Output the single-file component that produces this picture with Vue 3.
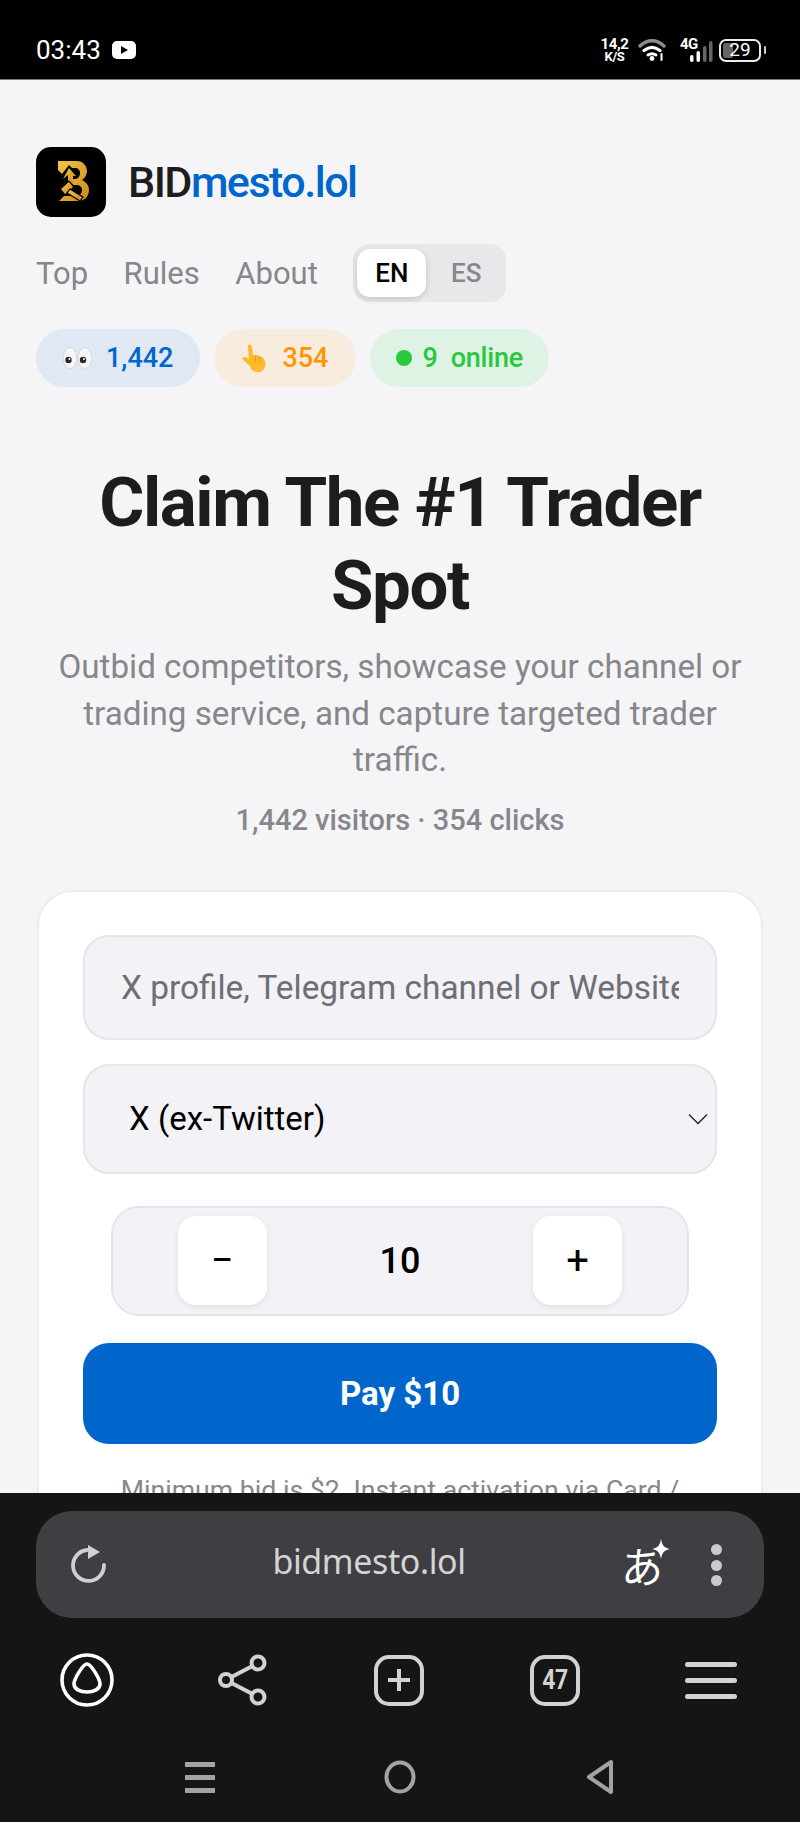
<script setup>
// 모바일 브라우저로 본 입찰 페이지 화면
import { ref } from 'vue';

const amount = ref(10);
const source = ref('x');
const lang = ref('EN');
</script>

<template>
  <div class="phone">
    <div class="status">
      <div class="status-left">
        <span class="clock">03:43</span>
        <svg class="yt" width="24" height="18" viewBox="0 0 24 18">
          <rect width="24" height="18" rx="5" fill="#fff" />
          <path d="M9 5l7 4-7 4z" fill="#000" />
        </svg>
      </div>
      <div class="status-right">
        <div class="speed"><span>14,2</span><span class="speed-unit">K/S</span></div>
        <svg width="28" height="22" viewBox="0 0 28 22" fill="none" stroke-linecap="round">
          <path d="M2 7C9 0 19 0 26 7" stroke="#8b8b8b" stroke-width="3.4" />
          <path d="M6 11.500c5-4 11-4 16 0" stroke="#fff" stroke-width="3.2" />
          <path d="M10 16c3-2 5-2 8 0" stroke="#fff" stroke-width="3" />
          <circle cx="14" cy="19.500" r="2.400" fill="#fff" />
          <path d="M23.500 15v6" stroke="#fff" stroke-width="2" />
        </svg>
        <div class="signal">
          <span class="net">4G</span>
          <svg width="24" height="22" viewBox="0 0 24 22">
            <rect x="0" y="14" width="3.500" height="7" rx="1.700" fill="#fff" />
            <rect x="6.500" y="10" width="3.500" height="11" rx="1.700" fill="#fff" />
            <rect x="13" y="5" width="3.500" height="16" rx="1.700" fill="#666" />
            <rect x="19" y="0" width="3.500" height="21" rx="1.700" fill="#666" />
          </svg>
        </div>
        <div class="battery">
          <span class="battery-fill"></span>
          <span class="battery-num">29</span>
        </div>
        <span class="battery-nub"></span>
      </div>
    </div>

    <main class="page">
      <header class="brand">
        <svg class="logo" width="70" height="70" viewBox="0 0 70 70">
          <defs>
            <linearGradient id="gold" x1="0" y1="0" x2="1" y2="1">
              <stop offset="0" stop-color="#f3c544" />
              <stop offset="1" stop-color="#c98a1c" />
            </linearGradient>
          </defs>
          <rect width="70" height="70" rx="15" fill="#000" />
          <!-- B 윤곽 -->
          <path
            d="M22 14H41C47 14 51 19 51 24C51 28 49 31 46 33C50 35 53 38 53 43C53 50 48 54 42 54H23L28 49H39C44 49 46 46 46 43C46 40 44 38 40 38H37V32H39C42 32 44 29 44 26C44 23 42 21 39 21H36L33 18L26 27L22 23Z"
            fill="url(#gold)"
          />
          <!-- 화살표 -->
          <path d="M33 21L40 29H37V37H32V28L27 32Z" fill="url(#gold)" />
          <!-- 망치 -->
          <g stroke="#000" stroke-width="1.200">
            <path d="M24 42L33 34L38 40L29 48Z" fill="url(#gold)" />
            <path d="M34 42L47 50L44 54L31 46Z" fill="url(#gold)" />
          </g>
        </svg>
        <span class="brand-name">BID<em>mesto.lol</em></span>
      </header>

      <nav class="nav">
        <a>Top</a>
        <a>Rules</a>
        <a>About</a>
        <div class="lang">
          <button type="button" :class="{ on: lang === 'EN' }" @click="lang = 'EN'">EN</button>
          <button type="button" :class="{ on: lang === 'ES' }" @click="lang = 'ES'">ES</button>
        </div>
      </nav>

      <div class="pills">
        <span class="pill pill--blue">
          <svg width="29" height="22" viewBox="0 0 29 22">
            <ellipse cx="7" cy="11" rx="6.800" ry="10.500" fill="#f6f6f6" stroke="#c8c8c8" stroke-width=".6" />
            <ellipse cx="22" cy="11" rx="6.800" ry="10.500" fill="#f6f6f6" stroke="#c8c8c8" stroke-width=".6" />
            <circle cx="5.500" cy="13" r="3.200" fill="#2a2a2a" />
            <circle cx="20" cy="13" r="3.200" fill="#2a2a2a" />
            <circle cx="6.500" cy="12" r="1" fill="#fff" />
            <circle cx="21" cy="12" r="1" fill="#fff" />
          </svg>
          1,442
        </span>
        <span class="pill pill--orange">
          <svg width="25" height="29" viewBox="0 0 25 29">
            <path
              d="M6 1c2-1 4 0 4 2l1 8c4 0 9 1 11 4 2 4 2 8-1 11-3 3-8 3-11 0l-3-5-6-5c-1-2 0-3 2-3l4 2L6 4c-.300-1-.300-2 0-3z"
              fill="#fbbb2c"
            />
            <path d="M14 12c-1 3-1 5 0 7M18 13c-1 2-1 4 0 6" stroke="#e8951a" stroke-width="1" fill="none" />
          </svg>
          354
        </span>
        <span class="pill pill--green"><i class="dot"></i>9&nbsp; online</span>
      </div>

      <section class="hero">
        <h1>Claim The #1 Trader Spot</h1>
        <p class="lead">Outbid competitors, showcase your channel or trading service, and capture targeted trader traffic.</p>
        <p class="stats">1,442 visitors · 354 clicks</p>
      </section>

      <form class="card" @submit.prevent>
        <input class="field" type="text" placeholder="X profile, Telegram channel or Website" />
        <div class="select-wrap">
          <select v-model="source" class="field field--select">
            <option value="x">X (ex-Twitter)</option>
            <option value="tg">Telegram</option>
            <option value="web">Website</option>
          </select>
          <svg class="chevron" width="20" height="12" viewBox="0 0 20 12" fill="none">
            <path d="M1 1.500l9 9 9-9" stroke="#222" stroke-width="1.300" />
          </svg>
        </div>
        <div class="stepper">
          <button type="button" @click="amount--">−</button>
          <span class="amount">{{ amount }}</span>
          <button type="button" @click="amount++">+</button>
        </div>
        <button type="submit" class="pay">Pay ${{ amount }}</button>
        <p class="note">Minimum bid is $2. Instant activation via Card / Crypto.</p>
      </form>
    </main>

    <div class="chrome">
      <div class="urlbar">
        <svg class="reload" width="60" height="60" viewBox="0 0 60 60" fill="none">
          <path d="M44 35A15.500 15.500 0 1 1 27 20" stroke="#d0d0d0" stroke-width="3.800" stroke-linecap="round" />
          <path d="M28 15L40 22L28 29Z" fill="#d0d0d0" />
        </svg>
        <span class="url">bidmesto.lol</span>
        <div class="translate">
          <span>あ</span>
          <svg class="spark" width="18" height="20" viewBox="0 0 18 20">
            <path d="M9 0c1 6 3 9 9 10-6 1-8 4-9 10-1-6-3-9-9-10 6-1 8-4 9-10z" fill="#fff" />
          </svg>
        </div>
        <div class="dots"><i></i><i></i><i></i></div>
      </div>

      <div class="tools">
        <svg width="54" height="54" viewBox="0 0 54 54" fill="none" stroke="#fff">
          <circle cx="27" cy="27" r="25" stroke-width="3.600" />
          <path d="M27 11c4 0 13 15 13 20 0 5-6 8-13 8s-13-3-13-8c0-5 9-20 13-20z" stroke-width="3.600" />
        </svg>
        <svg width="50" height="52" viewBox="0 0 50 52" fill="none" stroke="#d2d2d2" stroke-width="4">
          <circle cx="8" cy="26" r="6" />
          <circle cx="40" cy="9" r="6.500" />
          <circle cx="40" cy="43" r="6.500" />
          <path d="M13.500 23l21-11M13.500 29l21 11" />
        </svg>
        <div class="tab-box">
          <svg width="24" height="24" viewBox="0 0 24 24" fill="none" stroke="#d2d2d2" stroke-width="4">
            <path d="M12 1v22M1 12h22" />
          </svg>
        </div>
        <div class="tab-box tab-box--count"><span>47</span></div>
        <div class="burger"><i></i><i></i><i></i></div>
      </div>

      <div class="sysnav">
        <div class="sys-menu"><i></i><i></i><i></i></div>
        <svg width="32" height="34" viewBox="0 0 32 34" fill="none">
          <ellipse cx="16" cy="17" rx="13.500" ry="14.500" stroke="#a3a3a3" stroke-width="4" />
        </svg>
        <svg width="28" height="36" viewBox="0 0 28 36" fill="none">
          <path d="M25 3v30L3 18z" stroke="#a3a3a3" stroke-width="4" stroke-linejoin="round" />
        </svg>
      </div>
    </div>
  </div>
</template>

<style scoped>
.phone {
  width: 800px;
  height: 1822px;
  display: flex;
  flex-direction: column;
  overflow: hidden;
  background: #f5f5f7;
  font-family: Roboto, "Liberation Sans", sans-serif;
  color: #1d1d1f;
}

/* 상단 상태바 */
.status {
  height: 80px;
  flex: none;
  box-sizing: border-box;
  padding: 30px 34px 0 36px;
  background: #000;
  color: #fff;
  display: flex;
  justify-content: space-between;
  align-items: flex-start;
  border-bottom: 1px solid #777;
}

.status-left {
  display: flex;
  align-items: center;
  gap: 11px;
}

.clock {
  font-size: 26px;
  line-height: 40px;
}

.status-right {
  display: flex;
  align-items: center;
  margin-top: 7px;
}

.speed {
  width: 27px;
  display: flex;
  flex-direction: column;
  align-items: center;
  font-size: 15px;
  font-weight: 700;
  line-height: 14px;
  margin-right: 10px;
  letter-spacing: -0.4px;
  white-space: nowrap;
}

.speed-unit {
  font-size: 13px;
  line-height: 12px;
}

.signal {
  margin-left: 14px;
  position: relative;
  width: 38px;
  height: 24px;
}

.net {
  display: block;
  font-size: 15px;
  font-weight: 700;
  line-height: 13px;
  letter-spacing: -0.5px;
}

.signal svg {
  position: absolute;
  left: 10px;
  top: 3px;
}

.battery {
  position: relative;
  width: 42px;
  height: 23px;
  margin-left: 1px;
  box-sizing: border-box;
  border: 2px solid #eee;
  border-radius: 7px;
  display: flex;
  align-items: center;
  justify-content: center;
}

.battery-fill {
  position: absolute;
  left: 2px;
  top: 2px;
  bottom: 2px;
  width: 10px;
  background: #666;
  border-radius: 2px;
}

.battery-num {
  position: relative;
  font-size: 19px;
  line-height: 18px;
}

.battery-nub {
  width: 2px;
  height: 8px;
  margin-left: 3px;
  background: #ccc;
  border-radius: 1px;
}

/* 페이지 본문 */
.page {
  flex: 1;
  min-height: 0;
  overflow: hidden;
  box-sizing: border-box;
  padding: 67px 36px 0;
}

.brand {
  display: flex;
  align-items: center;
  gap: 22px;
}

.logo {
  display: block;
}

.brand-name {
  font-size: 43px;
  font-weight: 500;
  letter-spacing: -1.5px;
  color: #1d1d1f;
}

.brand-name em {
  font-style: normal;
  color: #0066cc;
}

.nav {
  display: flex;
  align-items: center;
  margin-top: 27px;
  font-size: 31px;
  color: #86868b;
}

.nav a {
  margin-right: 35.500px;
}

.lang {
  display: flex;
  align-items: center;
  gap: 4px;
  box-sizing: border-box;
  width: 153px;
  height: 58px;
  padding: 4px;
  background: #e8e8ea;
  border-radius: 16px;
}

.lang button {
  width: 72px;
  height: 48px;
  padding: 0;
  border: none;
  background: none;
  border-radius: 13px;
  font-family: inherit;
  font-size: 26px;
  font-weight: 500;
  color: #86868b;
}

.lang button:first-child {
  width: 69px;
}

.lang button.on {
  background: #fff;
  color: #000;
  box-shadow: 0 2px 6px rgba(0, 0, 0, 0.16);
}

.pills {
  display: flex;
  gap: 14px;
  margin-top: 27px;
}

.pill {
  height: 58px;
  box-sizing: border-box;
  padding: 0 27px;
  border-radius: 29px;
  display: flex;
  align-items: center;
  gap: 14px;
  font-size: 27px;
  font-weight: 500;
}

.pill--blue {
  background: #dfe8f3;
  color: #0066cc;
}

.pill--orange {
  background: #f8ecdf;
  color: #ff9500;
  padding: 0 28px;
  gap: 15px;
}

.pill--green {
  background: #dff3e4;
  color: #28c840;
  padding: 0 26px;
  gap: 10px;
  letter-spacing: -0.2px;
}

.dot {
  width: 16px;
  height: 16px;
  border-radius: 50%;
  background: #28c840;
}

.hero {
  margin-top: 74px;
  text-align: center;
}

.hero h1 {
  margin: 0 auto;
  width: 700px;
  font-size: 69px;
  font-weight: 700;
  line-height: 83px;
  letter-spacing: -1.4px;
  color: #1d1d1f;
}

.lead {
  margin: 17px 0 0;
  font-size: 33.200px;
  line-height: 46.500px;
  color: #86868b;
}

.stats {
  margin: 16px 0 0;
  font-size: 29px;
  font-weight: 500;
  line-height: 40px;
  color: #86868b;
}

/* 입찰 폼 카드 */
.card {
  margin: 50px 1px 0;
  padding: 43px 44px 40px;
  box-sizing: border-box;
  background: #fff;
  border: 2px solid #ececef;
  border-radius: 36px;
  display: flex;
  flex-direction: column;
}

.field {
  width: 100%;
  box-sizing: border-box;
  height: 105px;
  padding: 0 36px;
  border: 2px solid #e5e5ea;
  border-radius: 26px;
  background: #f2f2f7;
  font-family: inherit;
  font-size: 33.400px;
  color: #000;
  outline: none;
}

.field::placeholder {
  color: #6e6e73;
}

.select-wrap {
  position: relative;
  margin-top: 24px;
}

.field--select {
  display: block;
  height: 110px;
  padding: 0 44px;
  font-size: 33px;
  appearance: none;
}

.chevron {
  position: absolute;
  right: 9px;
  top: 50%;
  margin-top: -6px;
}

.stepper {
  margin: 32px 28px 0;
  height: 110px;
  box-sizing: border-box;
  padding: 0 65px;
  display: flex;
  align-items: center;
  justify-content: space-between;
  background: #f2f2f7;
  border: 2px solid #e5e5ea;
  border-radius: 28px;
}

.stepper button {
  width: 89px;
  height: 89px;
  padding: 0;
  border: none;
  border-radius: 18px;
  background: #fff;
  box-shadow: 0 2px 6px rgba(0, 0, 0, 0.08);
  font-family: inherit;
  font-size: 40px;
  color: #000;
}

.amount {
  font-size: 36px;
  font-weight: 500;
  color: #000;
}

.pay {
  margin-top: 27px;
  height: 101px;
  border: none;
  border-radius: 26px;
  background: #0066cc;
  color: #fff;
  font-family: inherit;
  font-size: 33px;
  font-weight: 700;
}

.note {
  margin: 28px 0 0;
  font-size: 26.700px;
  line-height: 36px;
  text-align: center;
  color: #86868b;
}

/* 하단 브라우저 UI */
.chrome {
  height: 329px;
  flex: none;
  background: #151516;
  box-sizing: border-box;
  padding-top: 18px;
}

.urlbar {
  margin: 0 36px;
  height: 107px;
  border-radius: 36px;
  background: #3f3f43;
  display: flex;
  align-items: center;
  position: relative;
  padding-left: 24px;
}

.reload {
  flex: none;
  margin-top: -9px;
}

.url {
  position: absolute;
  left: 0;
  width: 666px;
  text-align: center;
  font-family: "Noto Sans", sans-serif;
  font-size: 34px;
  letter-spacing: -0.4px;
  line-height: 44px;
  top: 28px;
  color: #d4d4d4;
}

.translate {
  position: absolute;
  left: 585px;
  top: 27px;
  width: 46px;
  height: 50px;
  font-family: "Noto Sans CJK JP", sans-serif;
  font-size: 42px;
  line-height: 54px;
  color: #fff;
}

.spark {
  position: absolute;
  right: -3px;
  top: 1px;
}

.dots {
  position: absolute;
  left: 675px;
  top: 33px;
  display: flex;
  flex-direction: column;
  gap: 4.500px;
}

.dots i {
  width: 11px;
  height: 11px;
  border-radius: 50%;
  background: #c9c9c9;
}

.tools {
  margin-top: 35px;
  padding-left: 9px;
  height: 54px;
  display: grid;
  grid-template-columns: repeat(5, 156px);
  justify-items: center;
  align-items: center;
}

.tab-box {
  width: 50px;
  height: 51px;
  box-sizing: border-box;
  border: 4px solid #d2d2d2;
  border-radius: 15px;
  display: flex;
  align-items: center;
  justify-content: center;
  color: #d2d2d2;
}

.tab-box--count {
  font-size: 27px;
  font-weight: 700;
  letter-spacing: -0.5px;
}

.tab-box--count span {
  transform: scaleX(0.85);
}

.burger,
.sys-menu {
  display: flex;
  flex-direction: column;
}

.burger {
  gap: 11px;
}

.burger i {
  width: 52px;
  height: 5px;
  border-radius: 3px;
  background: #d2d2d2;
}

.sysnav {
  margin-top: 52px;
  display: grid;
  grid-template-columns: 200px 200px 200px;
  justify-content: center;
  justify-items: center;
  align-items: center;
}

.sys-menu {
  gap: 8px;
}

.sys-menu i {
  width: 30px;
  height: 5px;
  background: #a3a3a3;
}
</style>

<style>
html,
body {
  background: #f5f5f7;
}
</style>
